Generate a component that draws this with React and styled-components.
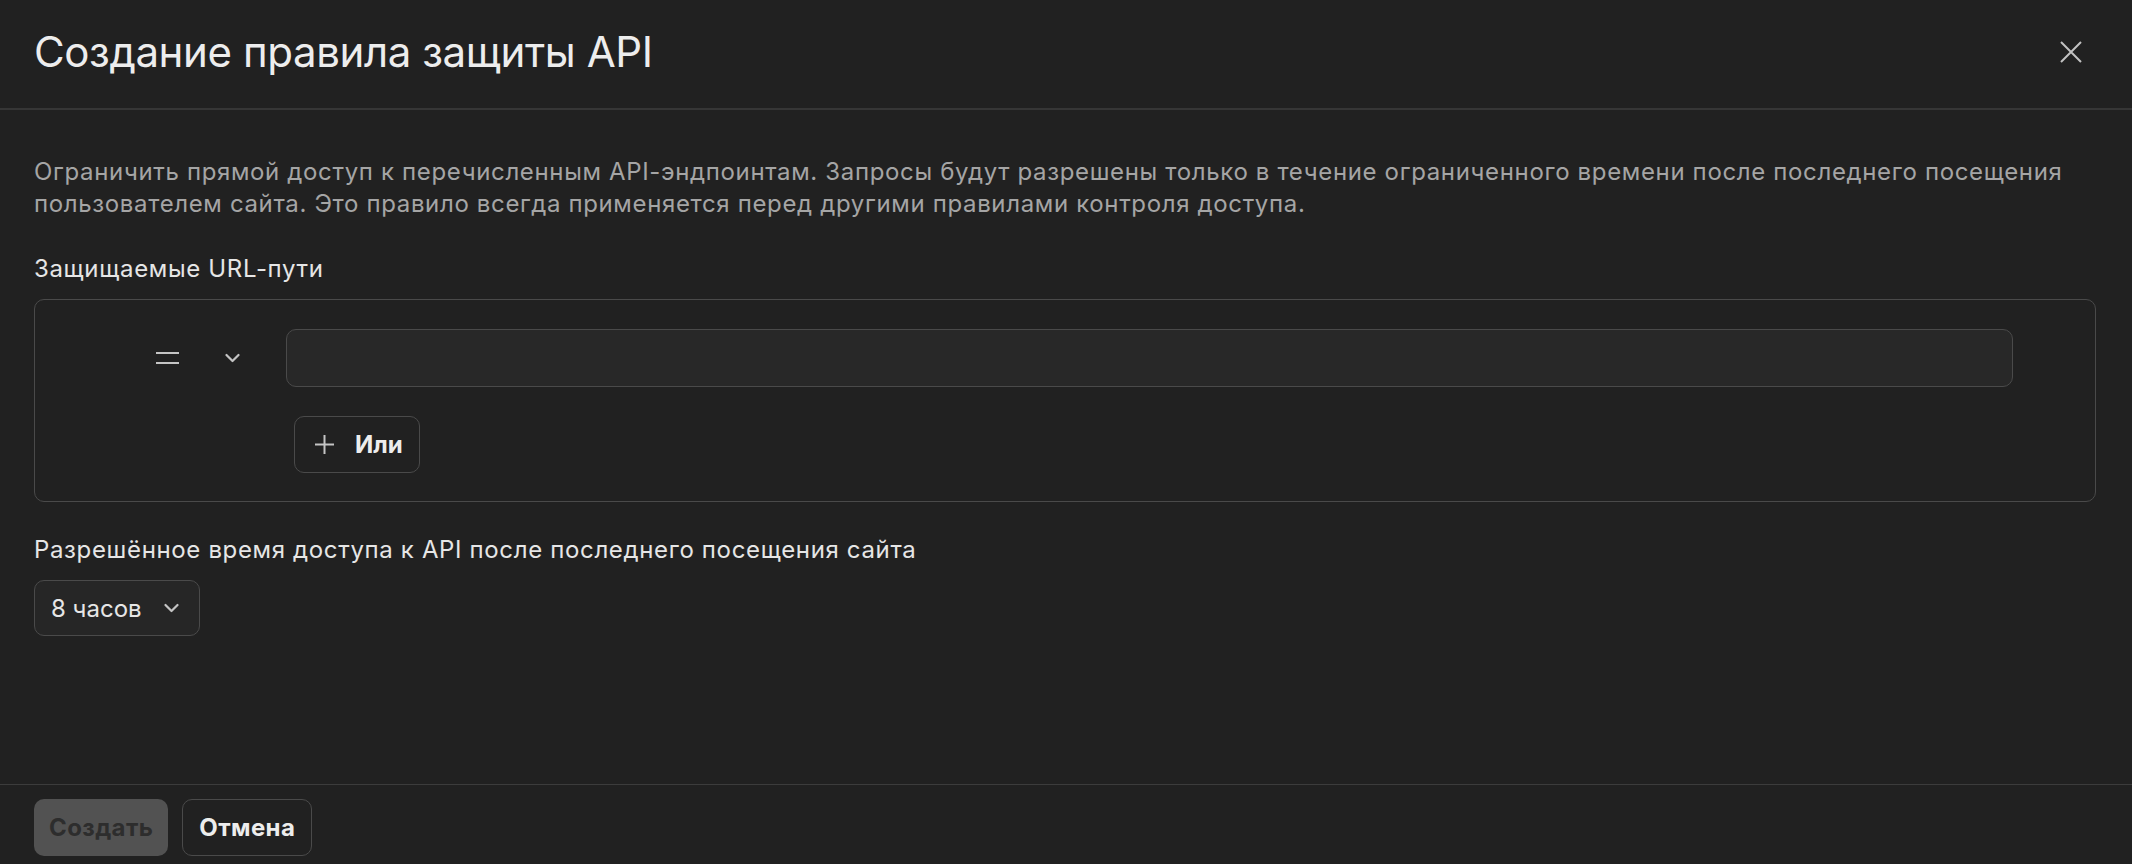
import React from "react";
import styled, { createGlobalStyle } from "styled-components";

const GlobalStyle = createGlobalStyle`
  html, body {
    margin: 0;
    padding: 0;
    background: #212121;
    overflow: hidden;
  }
  body {
    font-family: Inter, "Noto Sans", sans-serif;
    color: #ececec;
  }
  * { box-sizing: border-box; }
`;

const border = "#4a4a4a";

const Dialog = styled.div`
  display: flex;
  flex-direction: column;
  width: 100%;
`;

const Header = styled.header`
  height: 110px;
  display: flex;
  align-items: center;
  justify-content: space-between;
  padding: 0 50px 5px 34px;
  border-bottom: 2px solid #363636;
`;

const Title = styled.h1`
  margin: 0;
  font-size: 42px;
  font-weight: 400;
  letter-spacing: -0.4px;
  color: #ededed;
`;

const CloseButton = styled.button`
  display: flex;
  padding: 0;
  border: 0;
  background: none;
  color: #c2c2c2;
  cursor: pointer;
`;

const Body = styled.section`
  display: flex;
  flex-direction: column;
  align-items: flex-start;
  padding: 46px 36px 148px 34px;
`;

const Description = styled.p`
  margin: 0;
  font-size: 24px;
  line-height: 32px;
  letter-spacing: 0.65px;
  color: #a5a5a5;
`;

const Label = styled.div`
  margin: ${p => p.$top}px 0 14px;
  font-size: 24px;
  line-height: 32px;
  letter-spacing: 0.65px;
  color: #e6e6e6;
`;

const RuleBox = styled.div`
  align-self: stretch;
  display: grid;
  grid-template-columns: 251px 1fr;
  row-gap: 29px;
  padding: 29px 82px 28px 0;
  border: 1px solid ${border};
  border-radius: 10px;
`;

const Operator = styled.div`
  display: flex;
  align-items: center;
  justify-content: flex-end;
  gap: 46px;
  padding-right: 46px;
  color: #c4c4c4;
`;

const PathInput = styled.input`
  height: 58px;
  width: 100%;
  background: #282828;
  border: 1px solid ${border};
  border-radius: 10px;
  outline: none;
  padding: 0 16px;
  font: inherit;
  font-size: 24px;
  color: #ececec;
`;

const OrButton = styled.button`
  grid-column: 2;
  justify-self: start;
  margin-left: 8px;
  height: 57px;
  display: flex;
  align-items: center;
  gap: 21px;
  padding: 0 16px 0 20px;
  background: transparent;
  border: 1px solid ${border};
  border-radius: 10px;
  font: inherit;
  font-size: 24px;
  font-weight: 700;
  color: #ededed;
  svg { color: #c4c4c4; }
`;

const Select = styled.button`
  height: 56px;
  display: flex;
  align-items: center;
  gap: 22px;
  padding: 0 20px 0 16px;
  background: #262626;
  border: 1px solid ${border};
  border-radius: 10px;
  font: inherit;
  font-size: 24px;
  color: #e6e6e6;
  svg { color: #c4c4c4; }
`;

const Footer = styled.footer`
  display: flex;
  gap: 14px;
  padding: 14px 36px 14px 34px;
  border-top: 1px solid #3c3c3c;
`;

const Button = styled.button`
  height: 57px;
  padding: 0 ${p => (p.$primary ? 15 : 16)}px;
  border-radius: 10px;
  border: ${p => (p.$primary ? "none" : `1px solid ${border}`)};
  background: ${p => (p.$primary ? "#525252" : "transparent")};
  color: ${p => (p.$primary ? "#2d2d2d" : "#ededed")};
  font: inherit;
  font-size: 24px;
  font-weight: 700;
  letter-spacing: 0.4px;
`;

const CloseIcon = () => (
  <svg width="22" height="22" viewBox="0 0 22 22" fill="none" stroke="currentColor" strokeWidth="2">
    <path d="M1 1L21 21M21 1L1 21" />
  </svg>
);

const EqualsIcon = () => (
  <svg width="23" height="12" viewBox="0 0 23 12" fill="none" stroke="currentColor" strokeWidth="2.2">
    <path d="M0 1H23M0 11H23" />
  </svg>
);

const Chevron = () => (
  <svg width="15" height="10" viewBox="0 0 15 10" fill="none" stroke="currentColor" strokeWidth="2.2" strokeLinecap="round" strokeLinejoin="round">
    <path d="M1.5 2L7.5 8L13.5 2" />
  </svg>
);

const PlusIcon = () => (
  <svg width="19" height="19" viewBox="0 0 19 19" fill="none" stroke="currentColor" strokeWidth="2">
    <path d="M9.5 0V19M0 9.5H19" />
  </svg>
);

export default function App() {
  return (
    <Dialog>
      <GlobalStyle />
      <Header>
        <Title>Создание правила защиты API</Title>
        <CloseButton aria-label="Закрыть">
          <CloseIcon />
        </CloseButton>
      </Header>
      <Body>
        <Description>
          Ограничить прямой доступ к перечисленным API-эндпоинтам. Запросы будут разрешены только в течение
          ограниченного времени после последнего посещения пользователем сайта. Это правило всегда применяется
          перед другими правилами контроля доступа.
        </Description>
        <Label $top={33}>Защищаемые URL-пути</Label>
        <RuleBox>
          <Operator>
            <EqualsIcon />
            <Chevron />
          </Operator>
          <PathInput />
          <OrButton>
            <PlusIcon />
            Или
          </OrButton>
        </RuleBox>
        <Label $top={32}>Разрешённое время доступа к API после последнего посещения сайта</Label>
        <Select>
          8 часов
          <Chevron />
        </Select>
      </Body>
      <Footer>
        <Button $primary>Создать</Button>
        <Button>Отмена</Button>
      </Footer>
    </Dialog>
  );
}
